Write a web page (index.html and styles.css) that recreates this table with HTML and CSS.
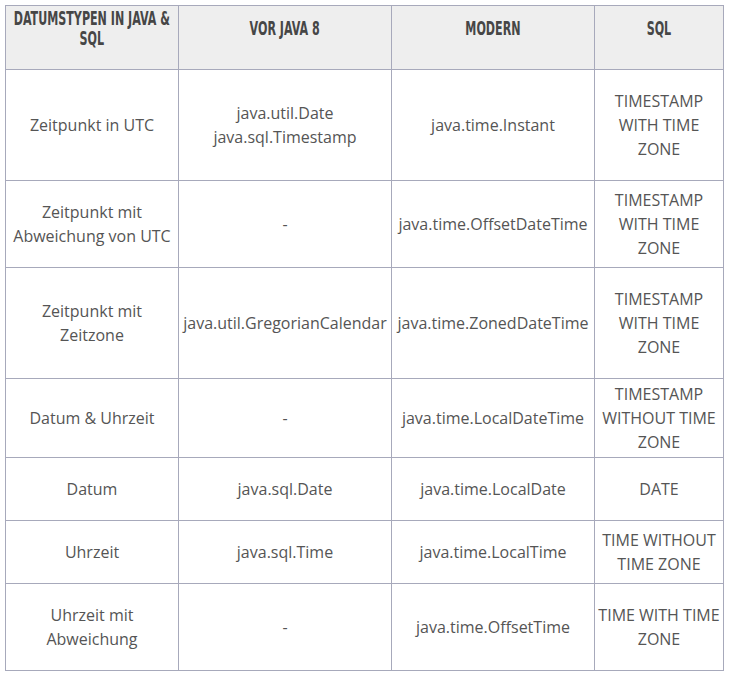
FILE: index.html
```html
<!DOCTYPE html>
<html lang="de">
<head>
<meta charset="utf-8">
<link rel="stylesheet" href="styles.css">
</head>
<body>
<table class="dt">
  <colgroup>
    <col class="c1"><col class="c2"><col class="c3"><col class="c4">
  </colgroup>
  <thead>
    <tr class="h">
      <th><span class="cond">DATUMSTYPEN IN JAVA &amp; SQL</span></th>
      <th><span class="cond">VOR JAVA 8</span></th>
      <th><span class="cond">MODERN</span></th>
      <th><span class="cond">SQL</span></th>
    </tr>
  </thead>
  <tbody>
    <tr class="r111">
      <td>Zeitpunkt in UTC</td>
      <td>java.util.Date<br>java.sql.Timestamp</td>
      <td>java.time.Instant</td>
      <td>TIMESTAMP WITH TIME ZONE</td>
    </tr>
    <tr class="r87">
      <td>Zeitpunkt mit Abweichung von UTC</td>
      <td>-</td>
      <td>java.time.OffsetDateTime</td>
      <td>TIMESTAMP WITH TIME ZONE</td>
    </tr>
    <tr class="r111">
      <td>Zeitpunkt mit Zeitzone</td>
      <td>java.util.GregorianCalendar</td>
      <td>java.time.ZonedDateTime</td>
      <td>TIMESTAMP WITH TIME ZONE</td>
    </tr>
    <tr class="r79">
      <td>Datum &amp; Uhrzeit</td>
      <td>-</td>
      <td>java.time.LocalDateTime</td>
      <td>TIMESTAMP WITHOUT TIME ZONE</td>
    </tr>
    <tr class="r63">
      <td>Datum</td>
      <td>java.sql.Date</td>
      <td>java.time.LocalDate</td>
      <td>DATE</td>
    </tr>
    <tr class="r63">
      <td>Uhrzeit</td>
      <td>java.sql.Time</td>
      <td>java.time.LocalTime</td>
      <td>TIME WITHOUT TIME ZONE</td>
    </tr>
    <tr class="r87">
      <td>Uhrzeit mit Abweichung</td>
      <td>-</td>
      <td>java.time.OffsetTime</td>
      <td>TIME WITH TIME ZONE</td>
    </tr>
  </tbody>
</table>
</body>
</html>
```

FILE: styles.css
```css
html, body {
  margin: 0;
  padding: 0;
  background: #ffffff;
}
body {
  padding: 5px;
}
.dt {
  border-collapse: collapse;
  table-layout: fixed;
  width: 719px;
  font-family: "Open Sans", "Liberation Sans", sans-serif;
  font-size: 16px;
  line-height: 24px;
  color: #555555;
}
.c1 { width: 173px; }
.c2 { width: 213px; }
.c3 { width: 203px; }
.c4 { width: 129px; }
.dt th, .dt td {
  border: 1px solid #a7a9bb;
  text-align: center;
  vertical-align: middle;
  padding: 3px 3px;
}
.dt th {
  background: #eeeeee;
  font-family: "DejaVu Sans Condensed", "DejaVu Sans", sans-serif;
  font-stretch: condensed;
  font-weight: bold;
  font-size: 19px;
  line-height: 20px;
  color: #464646;
  padding: 2px 3px 21px;
  overflow: visible;
}
.cond {
  display: block;
  width: 154%;
  margin-left: -27%;
  transform: scaleX(0.65);
  transform-origin: 50% 50%;
}
.h { height: 63px; }
.r111 { height: 111px; }
.r87 { height: 87px; }
.r79 { height: 79px; }
.r63 { height: 63px; }
```
